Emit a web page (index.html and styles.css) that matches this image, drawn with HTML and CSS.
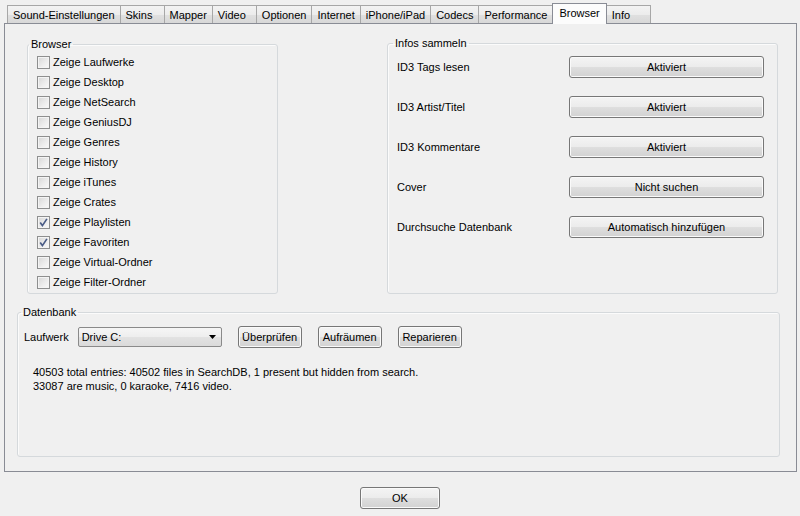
FILE: index.html
```html
<!DOCTYPE html>
<html lang="de">
<head>
    <meta charset="UTF-8">
    <title>Optionen</title>
    <link rel="stylesheet" href="styles.css">
</head>
<body>
    <div class="tabs">
        <div class="tab">Sound-Einstellungen</div>
        <div class="tab">Skins</div>
        <div class="tab">Mapper</div>
        <div class="tab">Video</div>
        <div class="tab">Optionen</div>
        <div class="tab">Internet</div>
        <div class="tab">iPhone/iPad</div>
        <div class="tab">Codecs</div>
        <div class="tab">Performance</div>
        <div class="tab active">Browser</div>
        <div class="tab">Info</div>
    </div>

    <div class="panel">
        <div class="top-row">
            <!-- Browser -->
            <fieldset class="group group-browser">
                <legend>Browser</legend>
                <label class="check"><span class="box"></span>Zeige Laufwerke</label>
                <label class="check"><span class="box"></span>Zeige Desktop</label>
                <label class="check"><span class="box"></span>Zeige NetSearch</label>
                <label class="check"><span class="box"></span>Zeige GeniusDJ</label>
                <label class="check"><span class="box"></span>Zeige Genres</label>
                <label class="check"><span class="box"></span>Zeige History</label>
                <label class="check"><span class="box"></span>Zeige iTunes</label>
                <label class="check"><span class="box"></span>Zeige Crates</label>
                <label class="check"><span class="box"><svg viewBox="0 0 11 11" width="11" height="11"><path d="M2.2 5.6 4.4 8.6 8.9 1.9"/></svg></span>Zeige Playlisten</label>
                <label class="check"><span class="box"><svg viewBox="0 0 11 11" width="11" height="11"><path d="M2.2 5.6 4.4 8.6 8.9 1.9"/></svg></span>Zeige Favoriten</label>
                <label class="check"><span class="box"></span>Zeige Virtual-Ordner</label>
                <label class="check"><span class="box"></span>Zeige Filter-Ordner</label>
            </fieldset>

            <!-- Infos sammeln -->
            <fieldset class="group group-infos">
                <legend>Infos sammeln</legend>
                <div class="info-grid">
                    <span>ID3 Tags lesen</span>
                    <button class="btn">Aktiviert</button>
                    <span>ID3 Artist/Titel</span>
                    <button class="btn">Aktiviert</button>
                    <span>ID3 Kommentare</span>
                    <button class="btn">Aktiviert</button>
                    <span>Cover</span>
                    <button class="btn">Nicht suchen</button>
                    <span>Durchsuche Datenbank</span>
                    <button class="btn">Automatisch hinzufügen</button>
                </div>
            </fieldset>
        </div>

        <!-- Datenbank -->
        <fieldset class="group group-db">
            <legend>Datenbank</legend>
            <div class="db-row">
                <span>Laufwerk</span>
                <div class="combo">
                    <span>Drive C:</span>
                    <svg viewBox="0 0 7 4" width="7" height="4"><path d="M0 0h7L3.5 4z"/></svg>
                </div>
                <button class="btn btn-db">Überprüfen</button>
                <button class="btn btn-db">Aufräumen</button>
                <button class="btn btn-db">Reparieren</button>
            </div>
            <div class="db-stats">
                40503 total entries: 40502 files in SearchDB, 1 present but hidden from search.<br>
                33087 are music, 0 karaoke, 7416 video.
            </div>
        </fieldset>
    </div>

    <div class="footer">
        <button class="btn btn-ok">OK</button>
    </div>
</body>
</html>
```

FILE: styles.css
```css
body {
    margin: 0;
    background: #f0f0f0;
    font-family: "Liberation Sans", Arial, sans-serif;
    font-size: 11px;
    color: #000;
    overflow: hidden;
}

/* Reiter */
.tabs {
    display: flex;
    align-items: flex-end;
    box-sizing: border-box;
    height: 23px;
    padding-left: 7px;
}

.tab {
    box-sizing: border-box;
    height: 18px;
    min-width: 45px;
    padding: 2px 5px 0 5px;
    margin-left: -1px;
    border: 1px solid #a7a7a7;
    border-bottom: none;
    background: linear-gradient(#f3f3f3 0%, #ececec 50%, #e0e0e0 51%, #d8d8d8 100%);
    line-height: 14px;
    white-space: nowrap;
}

.tab:first-child {
    margin-left: 0;
}

.tab.active {
    position: relative;
    z-index: 1;
    height: 21px;
    margin-bottom: -1px;
    padding: 2px 6px 0 6px;
    background: #fcfcfc;
    border-color: #898c95;
}

.panel {
    box-sizing: border-box;
    height: 449px;
    margin: 0 3px 0 4px;
    padding: 13px 17px 0 12px;
    border: 1px solid #898c95;
    background: #f0f0f0;
}

.top-row {
    display: flex;
    align-items: flex-start;
    padding-left: 10px;
}

/* Gruppen */
.group {
    box-sizing: border-box;
    margin: 0;
    min-width: 0;
    border: 1px solid #d5d9dc;
    border-radius: 3px;
    box-shadow: inset 1px 1px 0 #fbfbfb;
}

.group legend {
    padding: 0 2px;
    line-height: 13px;
}

.group-browser {
    width: 251px;
    height: 256px;
    margin-top: 1px;
    padding: 1px 0 0 9px;
}

.group-browser legend {
    margin-left: -8px;
}

.group-infos {
    width: 391px;
    height: 257px;
    margin-left: 109px;
    padding: 6px 0 0 9px;
}

.group-infos legend {
    margin-left: -4px;
}

.group-db {
    width: 763px;
    height: 151px;
    margin-top: 12px;
    padding: 7px 0 0 6px;
}

.group-db legend {
    margin-left: -3px;
}

/* Checkboxen */
.check {
    display: flex;
    align-items: center;
    height: 20px;
    white-space: nowrap;
}

.box {
    box-sizing: border-box;
    width: 13px;
    height: 13px;
    margin-right: 3px;
    border: 1px solid #8e8f8f;
    background: linear-gradient(135deg, #d6d6d6 0%, #ececec 55%, #fafafa 100%);
    box-shadow: inset 0 0 0 1px #f4f4f4;
    display: flex;
    align-items: center;
    justify-content: center;
}

.box svg path {
    fill: none;
    stroke: #4a5c86;
    stroke-width: 1.7;
}

/* Infos sammeln */
.info-grid {
    display: grid;
    grid-template-columns: 172px 195px;
    row-gap: 18px;
    align-items: center;
}

.btn {
    box-sizing: border-box;
    height: 22px;
    padding: 0;
    border: 1px solid #777;
    border-radius: 3px;
    background: linear-gradient(#f4f4f4 0%, #ececec 48%, #dedede 52%, #d2d2d2 100%);
    box-shadow: inset 0 0 0 1px #fafafa;
    font-family: inherit;
    font-size: 11px;
    color: #000;
    cursor: pointer;
}

/* Datenbank */
.db-row {
    display: flex;
    align-items: center;
}

.combo {
    box-sizing: border-box;
    width: 144px;
    height: 20px;
    margin: 0 16px 0 9px;
    padding: 0 5px 0 3px;
    display: flex;
    align-items: center;
    justify-content: space-between;
    border: 1px solid #8a8a8a;
    border-radius: 2px;
    background: linear-gradient(#f6f6f6 0%, #eeeeee 48%, #e2e2e2 52%, #dadada 100%);
}

.combo svg path {
    fill: #000;
}

.btn-db {
    width: 64px;
    margin-right: 16px;
}

.db-stats {
    margin-top: 17px;
    padding-left: 9px;
    line-height: 14px;
}

.footer {
    display: flex;
    justify-content: center;
    padding-top: 15px;
}

.btn-ok {
    width: 80px;
}
```
